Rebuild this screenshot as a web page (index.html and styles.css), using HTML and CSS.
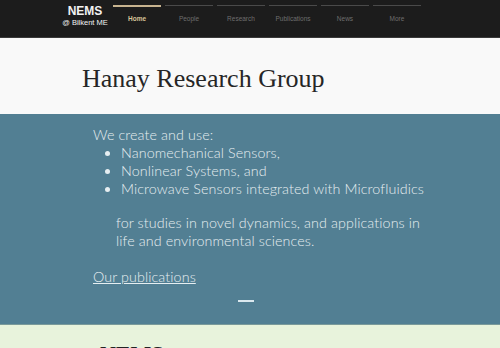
FILE: index.html
```html
<!DOCTYPE html>
<html lang="en">
<head>
<meta charset="UTF-8">
<meta name="viewport" content="width=device-width, initial-scale=1.0">
<link rel="stylesheet" href="styles.css">
<title>Hanay Research Group</title>
</head>
<body>
  <header class="topbar">
    <div class="brand">
      <div class="brand-name">NEMS</div>
      <div class="brand-sub">@ Bilkent ME</div>
    </div>
    <nav class="menu">
      <a class="menu-item active" href="#">Home</a>
      <a class="menu-item" href="#">People</a>
      <a class="menu-item" href="#">Research</a>
      <a class="menu-item" href="#">Publications</a>
      <a class="menu-item" href="#">News</a>
      <a class="menu-item" href="#">More</a>
    </nav>
  </header>

  <section class="hero">
    <h1>Hanay Research Group</h1>
  </section>

  <section class="intro">
    <p class="lead">We create and use:</p>
    <ul class="topics">
      <li>Nanomechanical Sensors,</li>
      <li>Nonlinear Systems, and</li>
      <li>Microwave Sensors integrated with Microfluidics</li>
    </ul>
    <p class="purpose">for studies in novel dynamics, and applications in life and environmental sciences.</p>
    <a class="pubs" href="#">Our publications</a>
    <div class="dash"></div>
  </section>

  <section class="nems">
    <h2>NEMS</h2>
  </section>
</body>
</html>
```

FILE: styles.css
```css
::-webkit-scrollbar {
  width: 6px;
}

::-webkit-scrollbar-track {
  background: #f4f4f4;
}

::-webkit-scrollbar-thumb {
  background: #a9a9a9;
  border-radius: 3px;
}

html {
  overflow-y: scroll;
}

body {
  margin: 0;
  font-family: Lato, "Open Sans", sans-serif;
}

.topbar {
  background-color: #1c1c1c;
  height: 37px;
  display: flex;
  align-items: flex-start;
  border-bottom: 1px solid #3a3a3a;
}

.brand {
  text-align: center;
  font-family: "Liberation Sans", Arial, sans-serif;
  color: #f2f2f2;
  padding-left: 57px;
  width: 56px;
  padding-top: 5px;
}

.brand-name {
  font-size: 12px;
  font-weight: bold;
  line-height: 13px;
}

.brand-sub {
  font-size: 7.5px;
  line-height: 9px;
}

.menu {
  display: flex;
  gap: 4px;
  margin-top: 5px;
}

.menu-item {
  width: 48px;
  border-top: 1px solid #4a4a4a;
  padding-top: 9px;
  text-align: center;
  font-family: "Liberation Sans", Arial, sans-serif;
  font-size: 6.5px;
  color: #6e6e6e;
  text-decoration: none;
}

.menu-item.active {
  border-top: 2px solid #c7b38f;
  padding-top: 8px;
  color: #d7c49a;
  font-weight: bold;
}

.hero {
  background-color: #f9f9f9;
  height: 76px;
  display: flex;
  align-items: center;
}

.hero h1 {
  margin: 6px 0 0 82px;
  font-family: "Liberation Serif", serif;
  font-weight: normal;
  font-size: 26px;
  color: #262626;
}

.intro {
  background-color: #527f93;
  color: #e6eef1;
  padding: 12px 0 22px 93px;
  font-weight: 300;
  font-size: 14.3px;
  line-height: 18px;
  letter-spacing: 0.1px;
  border-bottom: 1px solid #7a9a9a;
}

.lead {
  margin: 0;
}

.topics {
  margin: 0;
  padding-left: 28px;
}

.purpose {
  margin: 16px 0 0 23px;
  width: 320px;
}

.pubs {
  display: inline-block;
  margin-top: 18px;
  color: #e6eef1;
}

.dash {
  width: 16px;
  height: 2px;
  background-color: #dbe8ee;
  margin: 14px 0 0 145px;
}

.nems {
  background-color: #e8f3dc;
  padding: 16px 0 20px 100px;
  height: 300px;
}

.nems h2 {
  margin: 0;
  font-family: "Liberation Serif", serif;
  font-size: 22px;
  color: #222;
}
```
